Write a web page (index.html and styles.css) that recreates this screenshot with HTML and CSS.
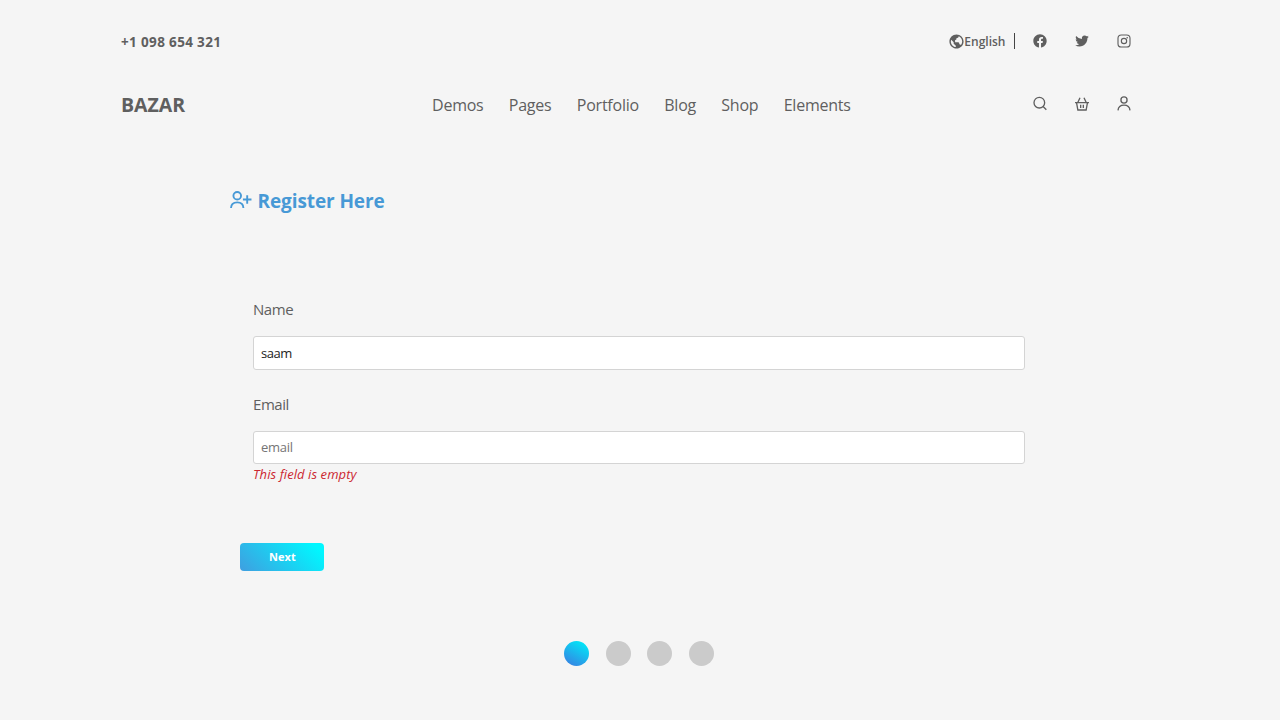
FILE: index.html
```html
<!DOCTYPE html>
<html lang="en">
<head>
  <meta charset="UTF-8" />
  <meta name="viewport" content="width=device-width, initial-scale=1.0" />
  <title>Bazar - Register</title>
  <link rel="stylesheet" href="styles.css">
</head>
<body>
  <header class="container">
    <!-- Top bar -->
    <div class="top-bar">
      <span class="phone">+1 098 654 321</span>
      <div class="top-right">
        <a class="language">
          <svg class="globe" viewBox="0 0 24 24"><path fill="currentColor" d="M12 2C6.486 2 2 6.486 2 12s4.486 10 10 10 10-4.486 10-10S17.514 2 12 2zM4 12c0-.899.156-1.762.431-2.569L6 11l2 2v2l2 2 1 1v1.931C7.061 19.436 4 16.072 4 12zm14.330 4.873C17.677 16.347 16.687 16 16 16v-1a2 2 0 0 0-2-2h-4v-3a2 2 0 0 0 2-2V7h1a2 2 0 0 0 2-2v-.411C17.928 5.778 20 8.650 20 12a7.947 7.947 0 0 1-1.670 4.873z"/></svg>
          <span>English</span>
        </a>
        <span class="divider"></span>
        <div class="icons">
          <svg viewBox="0 0 24 24"><path fill="currentColor" d="M12 2C6.477 2 2 6.477 2 12c0 4.991 3.657 9.128 8.438 9.879V14.890h-2.540V12h2.540V9.797c0-2.506 1.492-3.890 3.777-3.890 1.094 0 2.238.195 2.238.195v2.460h-1.260c-1.243 0-1.630.771-1.630 1.562V12h2.773l-.443 2.890h-2.330v6.989C18.343 21.129 22 16.990 22 12c0-5.523-4.477-10-10-10z"/></svg>
          <svg viewBox="0 0 24 24"><path fill="currentColor" d="M22.162 5.656a8.384 8.384 0 0 1-2.402.658A4.196 4.196 0 0 0 21.600 4c-.82.488-1.719.830-2.656 1.015a4.182 4.182 0 0 0-7.126 3.814 11.874 11.874 0 0 1-8.620-4.370 4.168 4.168 0 0 0-.566 2.103c0 1.450.738 2.731 1.860 3.481a4.168 4.168 0 0 1-1.894-.523v.052a4.185 4.185 0 0 0 3.355 4.101 4.210 4.210 0 0 1-1.890.072A4.185 4.185 0 0 0 7.970 16.650a8.394 8.394 0 0 1-6.191 1.732 11.830 11.830 0 0 0 6.410 1.880c7.693 0 11.900-6.373 11.900-11.900 0-.18-.005-.362-.013-.540a8.496 8.496 0 0 0 2.087-2.165z"/></svg>
          <svg class="line thin" viewBox="0 0 24 24"><rect x="3" y="3" width="18" height="18" rx="5"/><circle cx="12" cy="12" r="4"/><circle class="dot-fill" cx="16.800" cy="7.200" r="1.200"/></svg>
        </div>
      </div>
    </div>

    <!-- Main nav -->
    <div class="nav-bar">
      <h1 class="logo">BAZAR</h1>
      <nav class="menu">
        <a>Demos</a>
        <a>Pages</a>
        <a>Portfolio</a>
        <a>Blog</a>
        <a>Shop</a>
        <a>Elements</a>
      </nav>
      <div class="icons">
        <svg class="line" viewBox="0 0 24 24"><circle cx="11" cy="10" r="8"/><path d="M16.700 15.700L21.500 20.500"/></svg>
        <svg class="line" viewBox="0 0 24 24"><path d="M1.500 10H22.500M3.800 10L5.800 21H18.200L20.200 10M5.500 10L9 2.500M18.500 10L15 2.500M10 13V18M14 13V18"/></svg>
        <svg class="line" viewBox="0 0 24 24"><circle cx="12" cy="6" r="4.600"/><path d="M3 21.500C3.500 16 7 13.800 12 13.800S20.500 16 21 21.500"/></svg>
      </div>
    </div>
  </header>

  <main class="register">
    <h2 class="title">
      <svg class="line" viewBox="0 0 24 20"><circle cx="7.500" cy="5" r="4"/><path d="M1 18C1 14 3.500 12 7.500 12S14 14 14 18M18 4.500V13.500M13.500 9H22.500"/></svg>
      <span>Register Here</span>
    </h2>

    <form class="form">
      <div class="field">
        <label for="name">Name</label>
        <input type="text" id="name" value="saam" placeholder="name">
      </div>
      <div class="field">
        <label for="email">Email</label>
        <input type="text" id="email" placeholder="email">
        <p class="error">This field is empty</p>
      </div>
    </form>

    <button class="next" type="button">Next</button>
  </main>

  <!-- Steps -->
  <div class="steps">
    <span class="step active"></span>
    <span class="step"></span>
    <span class="step"></span>
    <span class="step"></span>
  </div>
</body>
</html>
```

FILE: styles.css
```css
* {
  box-sizing: border-box;
}
body {
  margin: 0;
  font-family: "Open Sans", "Noto Sans", sans-serif;
  background-color: #f5f5f5;
  color: #5f5f5f;
}
.container {
  width: 1011px;
  margin: 0 0 0 121px;
}
.top-bar {
  display: flex;
  justify-content: space-between;
  align-items: center;
  height: 82px;
}
.phone {
  padding-top: 1px;
  font-size: 13.500px;
  font-weight: 700;
  letter-spacing: 0.350px;
}
.top-right {
  display: flex;
  align-items: center;
}
.language {
  display: flex;
  align-items: center;
  font-size: 12px;
  font-weight: 600;
}
.globe {
  width: 17px;
  height: 17px;
  margin-right: -0.500px;
}
.divider {
  width: 1.500px;
  height: 16px;
  margin: 0 17px 0 8px;
  background-color: #444;
}
.icons {
  display: flex;
  gap: 26px;
}
.icons svg {
  width: 16px;
  height: 16px;
}
.nav-bar .icons {
  padding-bottom: 2px;
}
.line {
  fill: none;
  stroke: currentColor;
  stroke-width: 2;
}
.thin {
  stroke-width: 1.700;
}
.dot-fill {
  fill: currentColor;
  stroke: none;
}
.nav-bar {
  display: grid;
  grid-template-columns: 311px 1fr auto;
  align-items: center;
  height: 45px;
}
.logo {
  margin: 0;
  font-size: 19.500px;
  font-weight: 700;
}
.menu {
  display: flex;
  gap: 25.300px;
  font-size: 16px;
  letter-spacing: -0.230px;
}
.register {
  width: 820px;
  margin: 60px 0 0 230px;
}
.title {
  display: flex;
  align-items: center;
  gap: 4.500px;
  height: 28px;
  margin: 0;
  font-size: 19px;
  font-weight: 700;
  letter-spacing: -0.100px;
  color: #4799d6;
}
.title svg {
  width: 23px;
  height: 19px;
  margin-bottom: 1px;
}
.form {
  width: 772px;
  margin: 83px 0 0 23px;
}
.field {
  height: 94.500px;
}
.field label {
  display: block;
  height: 38px;
  font-size: 15px;
  line-height: 23px;
  letter-spacing: -0.450px;
}
.field input {
  display: block;
  width: 100%;
  height: 33.500px;
  padding: 0 7px;
  font-family: inherit;
  font-size: 13px;
  letter-spacing: -0.500px;
  color: #222;
  background-color: #fff;
  border: 1px solid #d4d4d4;
  border-radius: 3px;
  outline: none;
}
.field input::placeholder {
  color: #757575;
  letter-spacing: -0.250px;
}
.error {
  margin: 0;
  font-size: 13px;
  font-style: italic;
  line-height: 20px;
  letter-spacing: 0.080px;
  color: #cc2730;
}
.next {
  display: block;
  width: 84px;
  height: 28.500px;
  margin: 55.500px 0 0 10.400px;
  padding: 0;
  font-family: inherit;
  font-size: 11px;
  font-weight: 700;
  color: #fff;
  background: linear-gradient(45deg, #3f9ee0, #00f7ff 90%);
  border: none;
  border-radius: 4px;
}
.steps {
  display: flex;
  gap: 16.700px;
  margin: 70px 0 0 564px;
}
.step {
  width: 25px;
  height: 25px;
  border-radius: 50%;
  background-color: #cbcbcb;
}
.step.active {
  background: linear-gradient(30deg, #3c78e0, #00e8f8 90%);
}
```
